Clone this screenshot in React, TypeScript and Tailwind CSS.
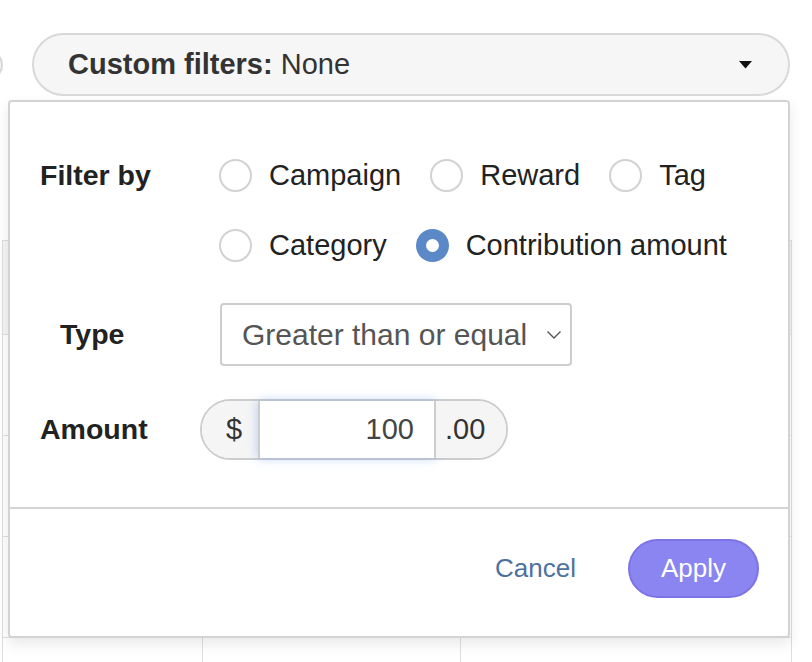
import React from "react";

function Radio({ label, checked }: { label: string; checked?: boolean }) {
  return (
    <label className="flex items-center gap-[17px]">
      {checked ? (
        <span className="flex h-[33px] w-[33px] items-center justify-center rounded-full bg-[#5b88c7]">
          <span className="h-[13px] w-[13px] rounded-full bg-white" />
        </span>
      ) : (
        <span className="h-[33px] w-[33px] rounded-full border-2 border-[#d2d2d2] bg-white" />
      )}
      <span className="text-[29px] leading-none text-[#222]">{label}</span>
    </label>
  );
}

export default function App() {
  return (
    <div
      className="relative h-[662px] w-[812px] overflow-hidden bg-white text-[#222]"
      style={{ fontFamily: '"Liberation Sans", Arial, sans-serif' }}
    >
      {/* top bar */}
      <div className="flex items-center pt-[33px]">
        <div className="ml-[-40px] h-[30px] w-[43px] shrink-0 rounded-full border-2 border-[#d6d6d6] bg-[#f6f6f6]" />
        <button className="ml-[29px] flex h-[63px] w-[758px] items-center justify-between rounded-full border-2 border-[#d9d9d9] bg-[#f6f6f6] pl-[34px] pr-[36px] text-[29px] text-[#333]">
          <span>
            <span className="font-bold">Custom filters:</span> None
          </span>
          <svg width="13" height="8" viewBox="0 0 13 8">
            <path d="M0 0 H13 L6.5 7.5 Z" fill="#111" />
          </svg>
        </button>
      </div>

      {/* background table */}
      <div className="ml-[2px] mt-[144px] w-[790px] border-l border-r border-[#dedede]">
        <div className="grid h-[95px] grid-cols-[200px_258px_330px] border-t border-b border-[#dedede] bg-[#f5f5f5]">
          <div className="border-r border-[#dedede]" />
          <div className="border-r border-[#dedede]" />
          <div />
        </div>
        {[0, 1, 2, 3].map((i) => (
          <div
            key={i}
            className="grid h-[101px] grid-cols-[200px_258px_330px] border-b border-[#dedede]"
          >
            <div className="border-r border-[#dedede]" />
            <div className="border-r border-[#dedede]" />
            <div />
          </div>
        ))}
      </div>

      {/* dropdown panel */}
      <div className="absolute left-[8px] top-[100px] flex h-[538px] w-[782px] flex-col rounded-[4px] border-2 border-[#d3d3d3] bg-white shadow-[0_6px_14px_rgba(0,0,0,0.09)]">
        <div className="flex h-[405px] flex-col pl-[30px] pt-[57px]">
          {/* Filter by */}
          <div className="flex">
            <div className="flex h-[33px] w-[179px] items-center text-[28.5px] font-bold">
              Filter by
            </div>
            <div className="flex flex-col gap-[37px]">
              <div className="flex gap-[29px]">
                <Radio label="Campaign" />
                <Radio label="Reward" />
                <Radio label="Tag" />
              </div>
              <div className="flex gap-[29px]">
                <Radio label="Category" />
                <Radio label="Contribution amount" checked />
              </div>
            </div>
          </div>

          {/* Type */}
          <div className="mt-[41px] flex items-center">
            <div className="w-[180px] pl-[20px] text-[28.5px] font-bold">Type</div>
            <div className="flex h-[63px] w-[352px] items-center justify-between rounded-[4px] border-2 border-[#cdcdcd] bg-white pl-[20px] pr-[8px] text-[30px] text-[#555]">
              <span>Greater than or equal</span>
              <svg width="16" height="10" viewBox="0 0 16 10">
                <path d="M1.5 1.5 L8 8 L14.5 1.5" fill="none" stroke="#555" strokeWidth="1.4" />
              </svg>
            </div>
          </div>

          {/* Amount */}
          <div className="mt-[33px] flex items-center">
            <div className="w-[160px] text-[28.5px] font-bold">Amount</div>
            <div className="flex h-[61px] w-[308px] rounded-full border-2 border-[#cdcdcd] text-[29px] text-[#333]">
              <div className="flex w-[56px] items-center justify-center rounded-l-full bg-[#f5f5f5] pl-[8px]">
                $
              </div>
              <div className="flex w-[178px] items-center justify-end border-l-2 border-r-2 border-[#cdcdcd] bg-white pr-[20px] text-[#444] shadow-[0_0_10px_rgba(102,150,233,0.45)]">
                100
              </div>
              <div className="flex flex-1 items-center rounded-r-full bg-[#f5f5f5] pl-[9px]">
                .00
              </div>
            </div>
          </div>
        </div>

        {/* footer */}
        <div className="flex flex-1 items-center justify-end border-t-2 border-[#d3d3d3] pb-[9px] pr-[29px]">
          <button className="mr-[52px] text-[26px] text-[#4d72a0]">Cancel</button>
          <button className="flex h-[59px] w-[131px] items-center justify-center rounded-full border-2 border-[#7c74e4] bg-[#8b85f2] text-[26px] text-white">
            Apply
          </button>
        </div>
      </div>
    </div>
  );
}
